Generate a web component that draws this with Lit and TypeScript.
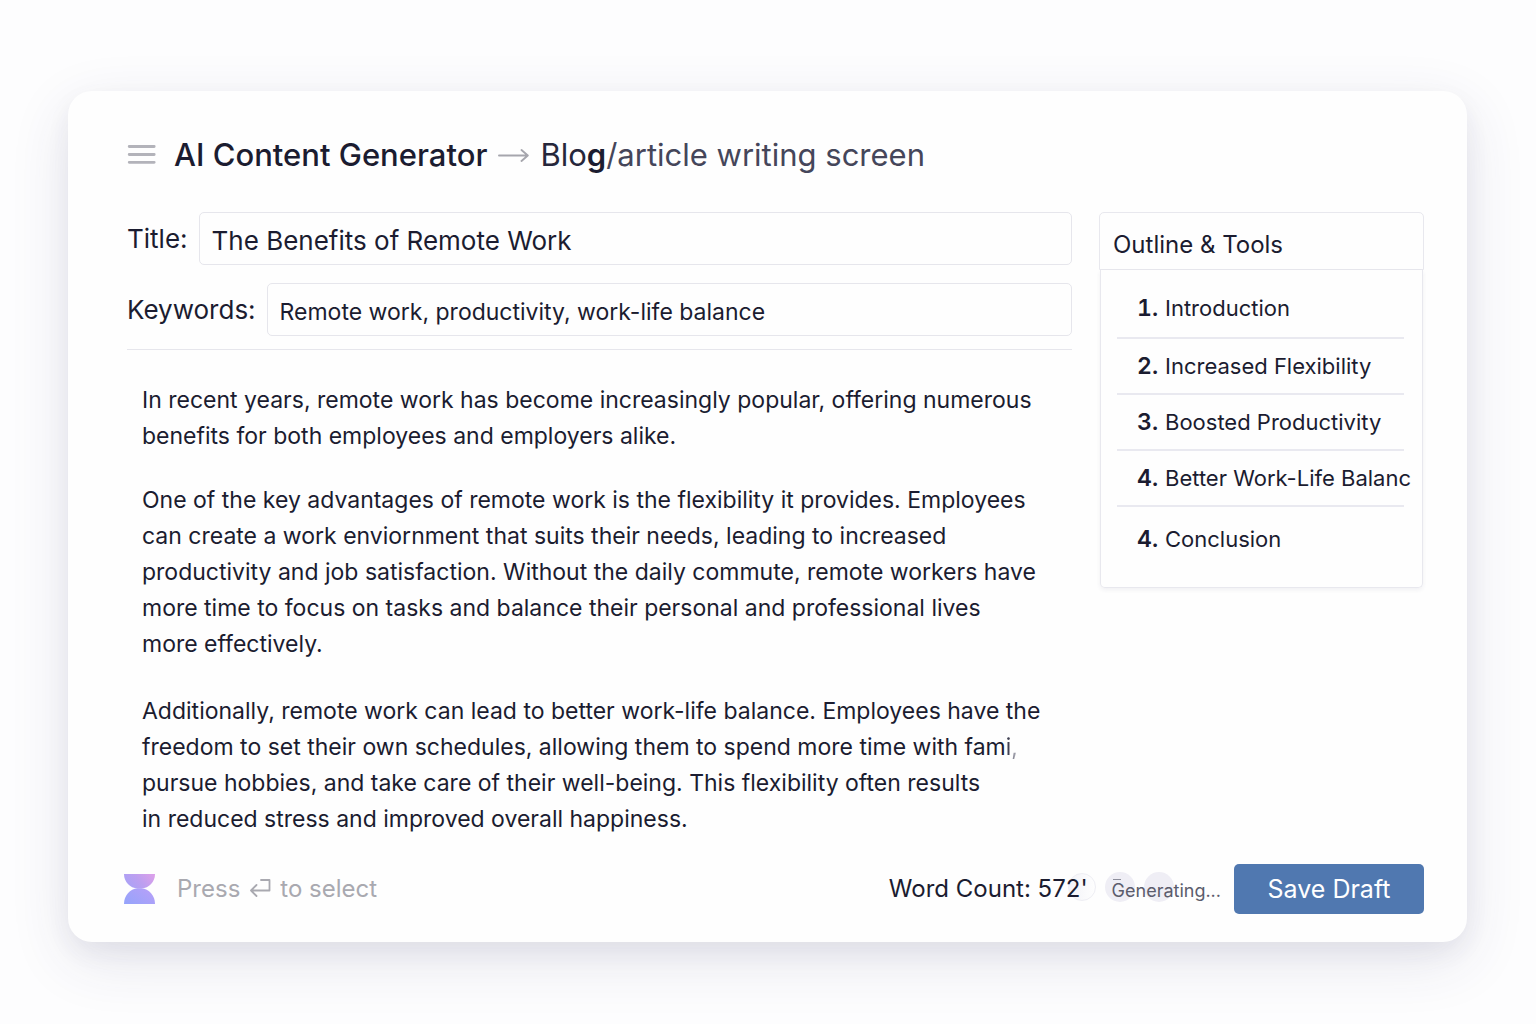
import { LitElement, html, css, svg } from "lit";
import { customElement, property, state } from "lit/decorators.js";

const menuIcon = svg`<svg width="29" height="20" viewBox="0 0 29 20" aria-hidden="true">
  <g stroke="#b3b3ba" stroke-width="2.800" stroke-linecap="round">
    <path d="M2.200 1.500H27.200M2.200 9.500H27.200M2.200 17.300H27.200" />
  </g>
</svg>`;

const arrowIcon = svg`<svg width="31" height="14" viewBox="0 0 31 14" aria-hidden="true">
  <path d="M1 7.500H29.500M23.500 2L29.800 7.500L23.500 13" fill="none" stroke="#a6a6ad" stroke-width="1.900" stroke-linecap="round" stroke-linejoin="round" />
</svg>`;

const returnIcon = svg`<svg width="22" height="20" viewBox="0 0 22 20" aria-hidden="true">
  <path d="M12 1H20.500V11.500H2M7.500 6L2 11.500L7.500 17" fill="none" stroke="#a9a9b0" stroke-width="1.800" stroke-linejoin="round" stroke-linecap="round" />
</svg>`;

const hourglassIcon = svg`<svg width="31" height="30" viewBox="0 0 31 30" aria-hidden="true">
  <defs>
    <linearGradient id="upper" x1="0" y1="0.600" x2="1" y2="0.200">
      <stop offset="0" stop-color="#a9a2f6" /><stop offset="0.500" stop-color="#bd9ff0" /><stop offset="1" stop-color="#dba0ea" />
    </linearGradient>
    <linearGradient id="lower" x1="0" y1="1" x2="1" y2="0.300">
      <stop offset="0" stop-color="#94a4fb" /><stop offset="1" stop-color="#b5a0f8" />
    </linearGradient>
  </defs>
  <path d="M0 0H31C31 8 25 14 17.500 14.500H13.500C6 14 0 8 0 0Z" fill="url(#upper)" />
  <path d="M0 30H31C31 21.500 25 15 17.500 14.300H13.500C6 15 0 21.500 0 30Z" fill="url(#lower)" />
</svg>`;

interface Section {
  number: string;
  label: string;
}

@customElement("outline-panel")
class OutlinePanel extends LitElement {
  @property({ attribute: false }) sections: Section[] = [];

  static styles = css`
    :host {
      display: block;
    }
    .title {
      margin: 0;
      padding: 12px 13px 0;
      height: 58px;
      box-sizing: border-box;
      border: 1px solid #e8e8ee;
      border-radius: 5px 5px 0 0;
      font-size: 24px;
      font-weight: 400;
      line-height: 40px;
    }
    .list {
      list-style: none;
      margin: 0 1px;
      padding: 9px 0 18px;
      border: 1px solid #e8e8ee;
      border-top: 0;
      border-radius: 0 0 5px 5px;
      box-shadow: 0 2px 4px rgba(60, 60, 100, 0.07);
    }
    .item {
      display: flex;
      margin: 0 18px 0 16px;
      padding-left: 20px;
      line-height: 54px;
      font-size: 22px;
      white-space: nowrap;
      border-bottom: 2px solid #e9e9f0;
    }
    .item:first-child {
      line-height: 58px;
    }
    .item:last-child {
      padding-top: 2px;
      line-height: 60px;
      border-bottom: 0;
    }
    .number {
      flex: 0 0 28px;
      font-size: 23px;
      font-weight: 600;
      font-variant-numeric: tabular-nums;
    }
  `;

  render() {
    return html`
      <h2 class="title">Outline &amp; Tools</h2>
      <ul class="list">
        ${this.sections.map(
          (s) => html`<li class="item"><span class="number">${s.number}</span>${s.label}</li>`
        )}
      </ul>
    `;
  }
}

@customElement("app-root")
class AppRoot extends LitElement {
  @state() private headline = "The Benefits of Remote Work";
  @state() private keywords = "Remote work, productivity, work-life balance";

  private sections: Section[] = [
    { number: "1.", label: "Introduction" },
    { number: "2.", label: "Increased Flexibility" },
    { number: "3.", label: "Boosted Productivity" },
    { number: "4.", label: "Better Work-Life Balanc" },
    { number: "4.", label: "Conclusion" },
  ];

  static styles = css`
    :host {
      display: block;
      box-sizing: border-box;
      min-height: 100vh;
      padding: 91px 69px 82px 68px;
      background: #fdfdfe;
      color: #1b1c30;
      font-family: Inter, "Liberation Sans", sans-serif;
    }
    .card {
      padding: 40px 43px 28px 59px;
      border-radius: 24px;
      background: #fefefe;
      box-shadow: 0 18px 60px rgba(50, 50, 110, 0.12), 0 10px 24px rgba(50, 50, 90, 0.06);
    }
    .header {
      display: flex;
      align-items: center;
      margin-bottom: 33px;
    }
    .menu {
      display: flex;
      padding: 0;
      margin-right: 18px;
      border: 0;
      background: none;
    }
    .heading {
      display: flex;
      align-items: center;
      gap: 11px;
      margin: 0;
      font-size: 31px;
      line-height: 48px;
      font-weight: 400;
    }
    .product {
      font-weight: 550;
    }
    .crumb {
      color: #45465a;
    }
    .crumb-start {
      color: #26273b;
    }
    .crumb-strong {
      color: #1b1c30;
      font-weight: 600;
    }
    .columns {
      display: grid;
      grid-template-columns: minmax(0, 1fr) 325px;
      gap: 27px;
      align-items: start;
    }
    .fields {
      display: grid;
      gap: 18px;
      padding-bottom: 13px;
      border-bottom: 1px solid #e6e6ec;
    }
    .field {
      display: flex;
      align-items: center;
      gap: 11px;
    }
    .label {
      font-size: 26px;
    }
    .input {
      flex: 1;
      min-width: 0;
      height: 53px;
      box-sizing: border-box;
      padding: 4px 12px 0;
      border: 1px solid #e6e6ec;
      border-radius: 5px;
      background: none;
      color: inherit;
      font: inherit;
      font-size: 26px;
    }
    .input-small {
      font-size: 23px;
    }
    .article {
      display: grid;
      gap: 28px;
      padding: 32px 0 27px 15px;
      font-size: 23px;
      line-height: 36px;
    }
    .paragraph {
      margin: 0;
      white-space: nowrap;
    }
    .paragraph:last-child {
      margin-top: 3px;
    }
    .fading {
      color: transparent;
      background: linear-gradient(90deg, #1b1c30, #d0d0d8);
      background-clip: text;
    }
    .footer {
      display: flex;
      align-items: center;
    }
    .glass {
      display: flex;
      margin: 0 22px 0 -3px;
    }
    .hint {
      display: flex;
      align-items: center;
      gap: 9px;
      color: #a9a9b0;
      font-size: 24px;
      line-height: 28px;
    }
    .count {
      position: relative;
      margin-left: auto;
      font-size: 24px;
      line-height: 28px;
    }
    .ring {
      position: absolute;
      right: -8px;
      top: -2px;
      width: 28px;
      height: 28px;
      box-sizing: border-box;
      border: 1px solid #eeeef4;
      border-radius: 50%;
      background: linear-gradient(90deg, #f3f3f8, #fefefe);
    }
    .count-text {
      position: relative;
    }
    .status {
      position: relative;
      margin: 0 13px 0 24px;
      color: #5b5c6c;
      font-size: 18px;
      line-height: 24px;
    }
    .dot {
      position: absolute;
      left: -7px;
      top: -5px;
      width: 30px;
      height: 30px;
      border-radius: 50%;
      background: #efeef5;
    }
    .dot-second {
      left: 32px;
    }
    .dash {
      position: absolute;
      left: 1px;
      top: 2px;
      width: 8px;
      height: 1px;
      background: #8d8e9b;
    }
    .status-text {
      position: relative;
      top: 2px;
    }
    .save {
      width: 190px;
      height: 50px;
      padding: 0;
      border: 0;
      border-radius: 5px;
      background: #5078b0;
      color: #fff;
      font: inherit;
      font-size: 25px;
    }
  `;

  render() {
    return html`
      <main class="card">
        <header class="header">
          <button class="menu" type="button" aria-label="Menu">${menuIcon}</button>
          <h1 class="heading">
            <span class="product">AI Content Generator</span>
            ${arrowIcon}
            <span class="crumb"
              ><span class="crumb-start">Blo</span><span class="crumb-strong">g</span>/article writing screen</span
            >
          </h1>
        </header>

        <div class="columns">
          <section>
            <div class="fields">
              <div class="field">
                <label class="label" for="title">Title:</label>
                <input
                  class="input"
                  id="title"
                  type="text"
                  .value=${this.headline}
                  @input=${(e: Event) => (this.headline = (e.target as HTMLInputElement).value)}
                />
              </div>
              <div class="field">
                <label class="label" for="keywords">Keywords:</label>
                <input
                  class="input input-small"
                  id="keywords"
                  type="text"
                  .value=${this.keywords}
                  @input=${(e: Event) => (this.keywords = (e.target as HTMLInputElement).value)}
                />
              </div>
            </div>

            <article class="article">
              <p class="paragraph">
                In recent years, remote work has become increasingly popular, offering numerous<br />
                benefits for both employees and employers alike.
              </p>
              <p class="paragraph">
                One of the key advantages of remote work is the flexibility it provides. Employees<br />
                can create a work enviornment that suits their needs, leading to increased<br />
                productivity and job satisfaction. Without the daily commute, remote workers have<br />
                more time to focus on tasks and balance their personal and professional lives<br />
                more effectively.
              </p>
              <p class="paragraph">
                Additionally, remote work can lead to better work-life balance. Employees have the<br />
                freedom to set their own schedules, allowing them to spend more time with fam<span class="fading">i,</span><br />
                pursue hobbies, and take care of their well-being. This flexibility often results<br />
                in reduced stress and improved overall happiness.
              </p>
            </article>
          </section>

          <outline-panel .sections=${this.sections}></outline-panel>
        </div>

        <footer class="footer">
          <span class="glass">${hourglassIcon}</span>
          <span class="hint">Press ${returnIcon} to select</span>
          <span class="count"><span class="ring"></span><span class="count-text">Word Count: 572'</span></span>
          <span class="status" role="status"
            ><span class="dot"></span><span class="dot dot-second"></span><span class="dash"></span
            ><span class="status-text">Generating...</span></span
          >
          <button class="save" type="button">Save Draft</button>
        </footer>
      </main>
    `;
  }
}
